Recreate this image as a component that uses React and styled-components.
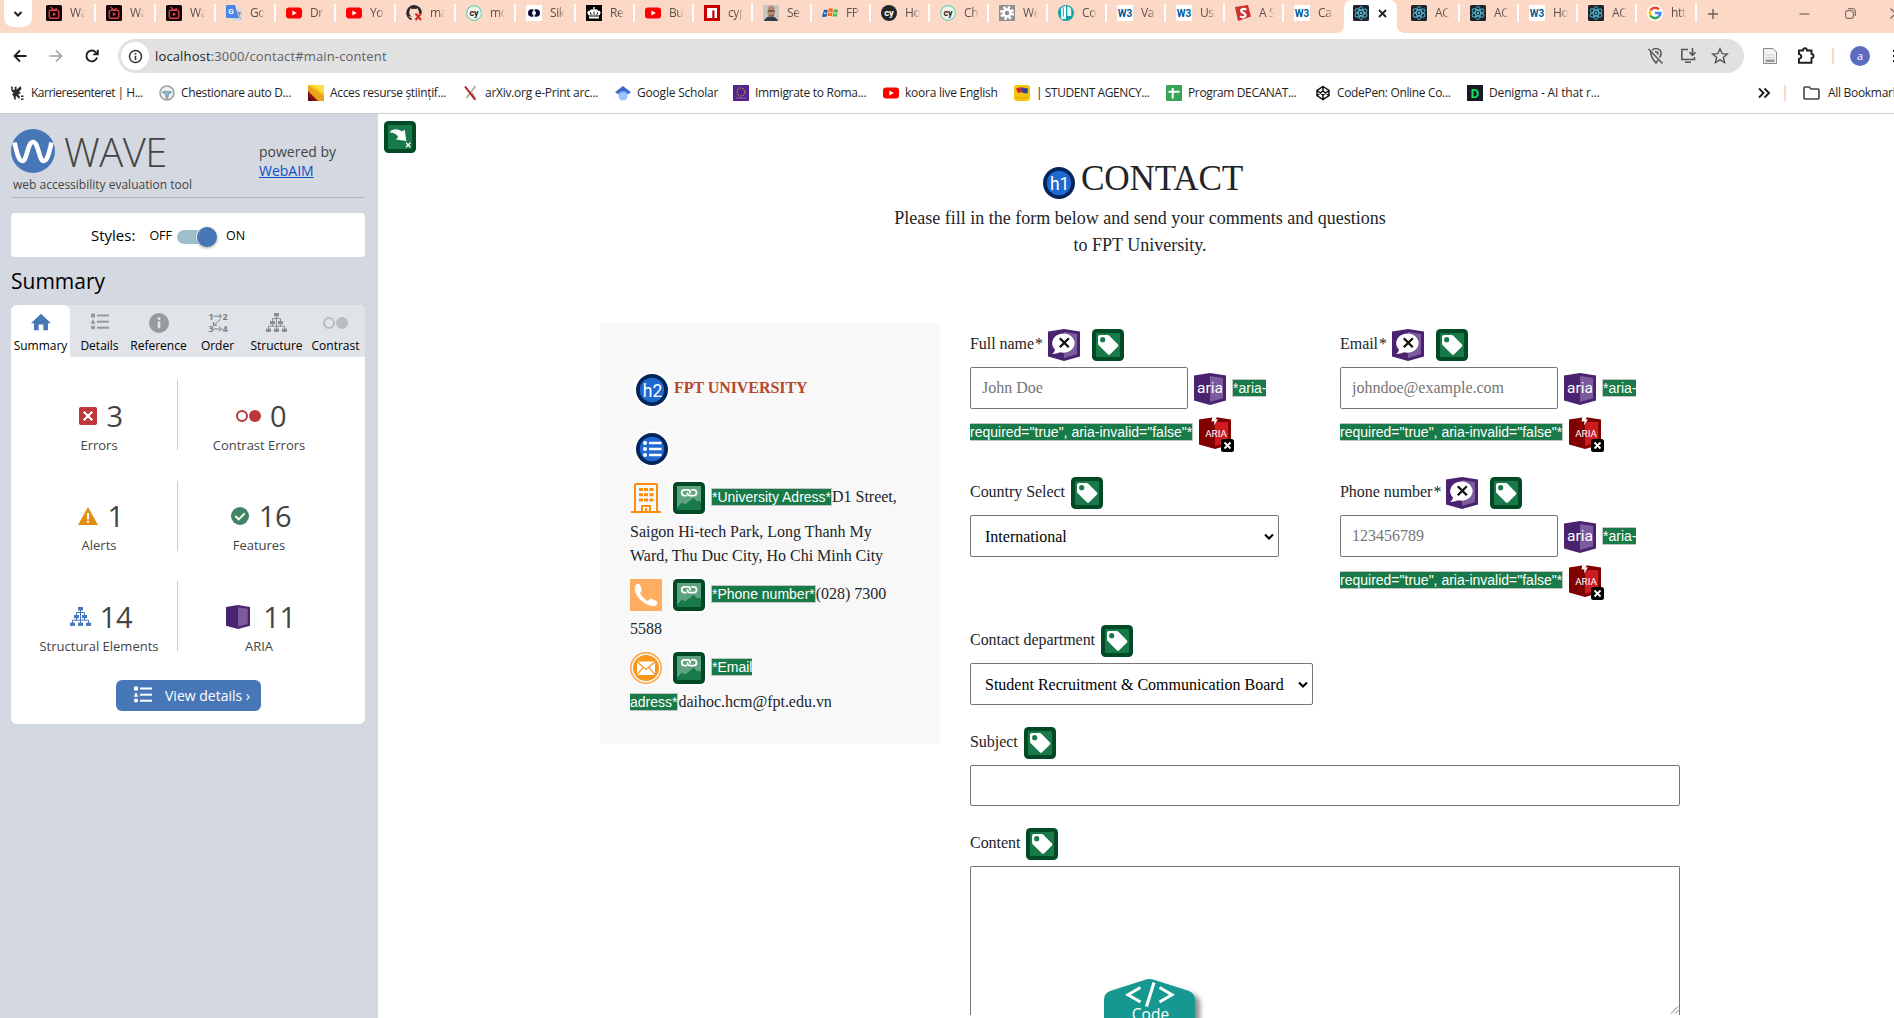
import React from "react";
import styled, { createGlobalStyle, css } from "styled-components";

const SANS = '"Open Sans", "Noto Sans", sans-serif';
const SERIF = '"Liberation Serif", "Times New Roman", serif';
const ARIAL = '"Liberation Sans", Arial, sans-serif';

const GlobalStyle = createGlobalStyle`
  * { box-sizing: border-box; }
  html, body { margin: 0; padding: 0; height: 100%; overflow: hidden; }
  #root { height: 1018px; }
  svg { display: block; flex: none; }
`;

/* ---------- browser chrome ---------- */

const Screen = styled.div`
  width: 1894px;
  height: 1018px;
  display: flex;
  flex-direction: column;
  overflow: hidden;
  background: #fff;
`;

const TabStrip = styled.div`
  height: 33px;
  flex: none;
  display: flex;
  background: #fcd9c7;
  font-family: ${SANS};
  overflow: hidden;
`;

const TabSearch = styled.div`
  width: 28px;
  height: 27px;
  margin: 0 4px;
  border-radius: 0 0 9px 9px;
  background: #fff;
  display: flex;
  align-items: center;
  justify-content: center;
`;

const Tab = styled.div`
  flex: none;
  width: ${(p) => p.$width}px;
  height: 26px;
  padding-left: 10px;
  display: flex;
  align-items: center;
  border-right: 2px solid ${(p) => (p.$divided ? "#fff" : "transparent")};
  border-image: ${(p) => (p.$divided ? "linear-gradient(transparent 5px, #fff 5px, #fff 21px, transparent 21px) 1" : "none")};
`;

const TabTitle = styled.span`
  width: 15px;
  margin-left: 8px;
  overflow: hidden;
  white-space: nowrap;
  font-size: 12px;
  line-height: 18px;
  letter-spacing: -0.4px;
  color: #5c504b;
  mask-image: linear-gradient(90deg, #000 55%, transparent);
`;

const ActiveTab = styled.div`
  position: relative;
  flex: none;
  width: 53px;
  margin: 0 4px 0 1px;
  height: 33px;
  padding: 0 10px 7px 9px;
  display: flex;
  align-items: center;
  justify-content: space-between;
  background: #fff;
  border-radius: 8px 8px 0 0;
  &::before,
  &::after {
    content: "";
    position: absolute;
    bottom: 0;
    width: 8px;
    height: 8px;
  }
  &::before {
    left: -8px;
    background: radial-gradient(circle at 0 0, transparent 8px, #fff 8px);
  }
  &::after {
    right: -8px;
    background: radial-gradient(circle at 100% 0, transparent 8px, #fff 8px);
  }
`;

const NewTab = styled.div`
  margin-left: 10px;
  height: 27px;
  display: flex;
  align-items: center;
`;

const WindowControls = styled.div`
  margin-left: auto;
  margin-right: -7px;
  height: 27px;
  display: flex;
  align-items: center;
  gap: 34.5px;
`;

const Toolbar = styled.div`
  height: 46px;
  flex: none;
  padding-left: 12px;
  display: flex;
  align-items: center;
  font-family: ${SANS};
`;

const NavButton = styled.div`
  width: 16px;
  margin-right: 20px;
  display: flex;
  justify-content: center;
`;

const AddressBar = styled.div`
  flex: none;
  width: 1626px;
  height: 34px;
  margin-left: -2px;
  padding: 0 15px 0 3px;
  border-radius: 17px;
  background: #e1e1e1;
  display: flex;
  align-items: center;
`;

const SiteInfo = styled.div`
  width: 28px;
  height: 28px;
  border-radius: 50%;
  background: #fff;
  display: flex;
  align-items: center;
  justify-content: center;
`;

const Url = styled.div`
  margin-left: 6px;
  flex: 1;
  font-size: 13px;
  letter-spacing: 0.14px;
  color: #5f6063;
  b {
    font-weight: 400;
    color: #1f1f1f;
  }
`;

const AddressIcons = styled.div`
  display: flex;
  gap: 14px;
`;

const ToolbarExtras = styled.div`
  flex: none;
  display: flex;
  align-items: center;
  padding-left: 17px;
`;

const PeachRule = styled.div`
  flex: none;
  width: 2px;
  height: 16px;
  margin: ${(p) => p.$margin};
  background: #fcd9c7;
`;

const Avatar = styled.div`
  flex: none;
  width: 20px;
  height: 20px;
  border-radius: 50%;
  background: #5c6bc0;
  color: #fff;
  font-size: 11px;
  line-height: 19px;
  text-align: center;
  margin-right: 22px;
`;

const BookmarkBar = styled.div`
  height: 35px;
  flex: none;
  padding: 0 0 7px 9px;
  display: flex;
  align-items: center;
  border-bottom: 1px solid #c9cbcc;
  font-family: ${SANS};
  font-size: 12px;
  color: #1f1f1f;
  white-space: nowrap;
`;

const Bookmark = styled.div`
  flex: none;
  width: ${(p) => p.$width}px;
  letter-spacing: ${(p) => p.$track}px;
  display: flex;
  align-items: center;
  gap: 6px;
`;

const BookmarkEnd = styled.div`
  display: flex;
  align-items: center;
`;

const AllBookmarks = styled.div`
  display: flex;
  align-items: center;
  gap: 8px;
  letter-spacing: -0.3px;
`;

/* ---------- layout ---------- */

const Body = styled.div`
  flex: 1;
  min-height: 0;
  display: flex;
`;

/* ---------- WAVE sidebar ---------- */

const Sidebar = styled.aside`
  width: 378px;
  flex: none;
  padding: 15px 13px 0 11px;
  background: #d4d8e0;
  font-family: ${SANS};
  color: #000;
`;

const Brand = styled.header`
  height: 69px;
  display: flex;
  justify-content: space-between;
  border-bottom: 1px solid #b4b7ba;
  color: #444;
`;

const BrandRow = styled.div`
  height: 44px;
  display: flex;
  align-items: center;
  gap: 9px;
`;

const BrandName = styled.span`
  padding-top: 2px;
  font-size: 40px;
  line-height: 44px;
  font-weight: 300;
  letter-spacing: -0.5px;
`;

const Tagline = styled.div`
  margin: 3px 0 0 2px;
  font-size: 12px;
  line-height: 17px;
`;

const Powered = styled.div`
  width: 106px;
  padding-top: 13px;
  font-size: 14px;
  line-height: 19px;
  a {
    color: #0a52cc;
    text-decoration: underline;
  }
`;

const StylesBox = styled.div`
  height: 44px;
  margin-top: 15px;
  padding-left: 80px;
  border-radius: 4px;
  background: #fff;
  display: flex;
  align-items: center;
  font-size: 15px;
`;

const ToggleLabel = styled.span`
  font-size: 12.5px;
  margin-left: ${(p) => p.$gap}px;
`;

const Toggle = styled.span`
  width: 40px;
  height: 14px;
  margin: 3px 0 0 5px;
  border-radius: 7px;
  background: #9dbfc9;
  display: flex;
  align-items: center;
  justify-content: flex-end;
`;

const Knob = styled.span`
  flex: none;
  width: 20px;
  height: 20px;
  border-radius: 50%;
  background: #4877b8;
  box-shadow: 0 1px 3px rgba(0, 0, 0, 0.4), 0 0 0 1px #fff;
`;

const SectionTitle = styled.h2`
  margin: 8px 0 8px;
  height: 32px;
  font-size: 21px;
  line-height: 32px;
  font-weight: 400;
`;

const Panel = styled.section`
  height: 419px;
  border-radius: 6px;
  background: #fff;
  overflow: hidden;
`;

const PanelTabs = styled.nav`
  height: 52px;
  display: grid;
  grid-template-columns: repeat(6, 59px);
  background: #e0e3e8;
`;

const PanelTab = styled.div`
  padding-top: 8px;
  display: flex;
  flex-direction: column;
  align-items: center;
  font-size: 12px;
  line-height: 16px;
  border-radius: 6px 6px 0 0;
  background: ${(p) => (p.$active ? "#fff" : "transparent")};
  svg { margin-bottom: 5px; }
`;

const StatsGrid = styled.div`
  padding-top: 23px;
  display: grid;
  grid-template-columns: 167px 163px;
  grid-template-rows: 70px 70px 70px;
  row-gap: 30.5px;
`;

const Stat = styled.div`
  display: flex;
  flex-direction: column;
  align-items: center;
  padding-top: ${(p) => p.$top}px;
  padding-left: ${(p) => (p.$first ? 10 : 0)}px;
  padding-right: ${(p) => (p.$first ? 0 : 1)}px;
  border-right: ${(p) => (p.$first ? "1px solid #ccc" : "0")};
  color: #444;
`;

const StatTop = styled.div`
  height: 38px;
  padding-left: 4px;
  display: flex;
  align-items: center;
  gap: ${(p) => p.$gap}px;
  font-size: 29px;
  line-height: 38px;
  letter-spacing: -0.4px;
`;

const StatLabel = styled.div`
  margin-top: 1px;
  font-size: 13px;
  line-height: 18px;
`;

const DetailsButton = styled.div`
  width: 145px;
  height: 31px;
  margin: 29px 0 0 105px;
  padding-left: 17px;
  border-radius: 6px;
  background: #4877b8;
  color: #fff;
  display: flex;
  align-items: center;
  gap: 12px;
  font-size: 14px;
  white-space: nowrap;
`;

/* ---------- evaluated page ---------- */

const Page = styled.main`
  position: relative;
  flex: 1;
  padding: 7px 0 0 6px;
  font-family: ${SERIF};
  font-size: 16px;
  line-height: 24px;
  color: #212529;
  overflow: hidden;
`;

const Hero = styled.header`
  width: 1080px;
  margin: 5px 0 0 216px;
  text-align: center;
  font-size: 18px;
  line-height: 27px;
`;

const HeroTitle = styled.h1`
  height: 47px;
  margin: 0;
  padding-left: 6px;
  display: flex;
  align-items: flex-start;
  justify-content: center;
  gap: 6px;
  font-size: 35.2px;
  line-height: 42px;
  letter-spacing: -0.2px;
  font-weight: 400;
  svg { margin-top: 9px; }
`;

const Content = styled.div`
  margin: 64px 0 0 216px;
  display: flex;
  align-items: flex-start;
  gap: 30px;
`;

const Card = styled.section`
  width: 340px;
  height: 421px;
  padding: 51px 30px 0;
  background: #f8f8f8;
`;

const CardTitle = styled.h2`
  margin: 0 0 27px;
  padding-left: 6px;
  display: flex;
  gap: 6px;
  font-size: 16px;
  line-height: 28px;
  color: #b5472c;
  letter-spacing: -0.06px;
`;

const ListBadge = styled.div`
  padding-left: 6px;
  margin-bottom: 6px;
`;

const InfoItem = styled.div`
  letter-spacing: -0.02px;
`;

const InfoLead = styled.div`
  height: 49px;
  padding-top: 11px;
  display: flex;
  white-space: nowrap;
`;

const InfoText = styled.span`
  margin-top: 3px;
`;

const Halo = styled.span`
  width: 32px;
  height: 32px;
  margin: ${(p) => p.$margin || 0};
  border-radius: ${(p) => (p.$round ? "50%" : "5px")};
  box-shadow: 0 0 0 2.5px #fff;
`;

const NoteLine = styled.div`
  height: 24px;
  display: flex;
`;

const AltNote = styled.span`
  height: 18px;
  font-family: ${ARIAL};
  font-size: 14px;
  line-height: 16px;
  letter-spacing: 0;
  color: #fff;
  background: #187a48;
  border: solid #c4c4c4;
  border-width: ${(p) => p.$edges};
  margin-top: ${(p) => p.$top}px;
  white-space: nowrap;
`;

const Form = styled.form`
  width: 710px;
  padding-top: 6px;
`;

const FieldGrid = styled.div`
  display: grid;
  grid-template-columns: 370px 340px;
  grid-auto-rows: 148px;
`;

const Field = styled.div`
  height: ${(p) => p.$height}px;
`;

const FieldLabel = styled.div`
  height: 32px;
  margin-bottom: 6px;
  display: flex;
  letter-spacing: -0.04px;
  white-space: nowrap;
`;

const LabelText = styled.span`
  margin-top: 3px;
`;

const Required = styled.span`
  margin: 3px 5px 0 1px;
`;

const LabelMarks = styled.span`
  display: flex;
  gap: 12px;
  margin-left: ${(p) => p.$gap}px;
`;

const controlBox = css`
  display: block;
  border: 1px solid #767676;
  border-radius: 2px;
  background: #fff;
  font-family: ${SERIF};
  font-size: 16px;
  line-height: 24px;
  outline: none;
`;

const Input = styled.input`
  ${controlBox}
  width: ${(p) => p.$width}px;
  height: ${(p) => p.$height || 42}px;
  padding: 0 11px;
  &::placeholder { color: #757575; opacity: 1; }
`;

const Select = styled.div`
  ${controlBox}
  width: ${(p) => p.$width}px;
  height: 42px;
  padding: 1px 4px 0 14px;
  display: flex;
  align-items: center;
  justify-content: space-between;
  color: #000;
`;

const Textarea = styled.div`
  ${controlBox}
  width: 710px;
  height: 149px;
  border-bottom: 0;
  border-radius: 2px 2px 0 0;
  display: flex;
  align-items: flex-end;
  justify-content: flex-end;
`;

const ControlRow = styled.div`
  height: 50px;
  display: flex;
  gap: 6px;
`;

const RowMark = styled.span`
  margin-top: ${(p) => p.$top}px;
`;

const ErrorRow = styled.div`
  display: flex;
  gap: 6px;
`;

const CodeBadge = styled.div`
  position: absolute;
  left: 720px;
  bottom: 0;
`;

/* ---------- svg text ---------- */

const GlyphText = styled.text`
  font-family: ${(p) => p.$family || "Roboto, sans-serif"};
  font-weight: ${(p) => p.$weight || 400};
  text-anchor: middle;
`;

/* ---------- WAVE markers ---------- */

const RoundMark = ({ label }) => (
  <svg width="32" height="32" viewBox="0 0 32 32">
    <circle cx="16" cy="16" r="16" fill="#02265a" />
    <circle cx="16" cy="16" r="12.2" fill="#2069d0" />
    {label ? (
      <GlyphText x="16.5" y="22.7" fontSize="17.5" fill="#fff">{label}</GlyphText>
    ) : (
      <g fill="#fff">
        <circle cx="9" cy="10" r="2" /><circle cx="9" cy="16" r="2" /><circle cx="9" cy="22" r="2" />
        <rect x="13" y="8.7" width="12.5" height="2.6" rx="0.5" />
        <rect x="13" y="14.7" width="12.5" height="2.6" rx="0.5" />
        <rect x="13" y="20.7" width="12.5" height="2.6" rx="0.5" />
      </g>
    )}
  </svg>
);

const GreenTile = ({ children }) => (
  <svg width="32" height="32" viewBox="0 0 32 32">
    <rect width="32" height="32" rx="4.5" fill="#024a26" />
    <rect x="4" y="4" width="24" height="24" rx="1" fill="#187a48" />
    {children}
  </svg>
);

const TagMark = () => (
  <GreenTile>
    <path d="M8 6 H15.5 Q16.6 6 17.4 6.8 L26 15.4 Q26.8 16.5 26 17.6 L18.2 25.3 Q17 26.4 15.8 25.3 L7 16.6 Q6 15.6 6 14.4 V8 Q6 6 8 6 Z" fill="#fff" />
    <circle cx="10.7" cy="10.7" r="2.6" fill="#187a48" />
  </GreenTile>
);

const SkipMark = () => (
  <GreenTile>
    <path d="M5.5 11.5 C8 7.6 14 7.2 17.7 10.6 L20.7 8.8 L22.3 20 L12 18.6 L14.2 16 C12.5 13 9.5 11.3 5.5 11.5 Z" fill="#fff" />
    <path d="M22 21.8 l4.4 4.4 M26.4 21.8 l-4.4 4.4" stroke="#fff" strokeWidth="1.4" />
  </GreenTile>
);

const ImageMark = () => (
  <GreenTile>
    <rect x="4" y="4" width="24" height="24" fill="#5da37f" />
    <path d="M4 25.5 L9 20.5 L12 22.5 L20.8 15.7 L24 19.5 L26 18.5 L28 20.5 V28 H4 Z" fill="#187a48" />
    <path d="M13.8 13.6 H11.6 A2.9 2.9 0 0 1 11.6 7.8 H14.6 Q17.2 7.8 17.2 10 V11.4 M18.2 7.8 H20.6 A2.9 2.9 0 0 1 20.6 13.6 H17.4 Q14.6 13.6 14.6 11.4 V10.2" fill="none" stroke="#fff" strokeWidth="1.7" />
  </GreenTile>
);

const Box = ({ dark, light, children, size = 32 }) => (
  <svg width={size} height={size} viewBox="0 0 32 32">
    <path d="M16 0 L32 2.6 V27.5 L16 32 L0 27.5 V2.6 Z" fill={dark} />
    <path d="M16 3 L29 5 V25.3 L16 29 Z" fill={light} />
    {children}
  </svg>
);

const AriaMark = () => (
  <Box dark="#4a2370" light="#7c5a9e">
    <GlyphText x="16" y="20" fontSize="15.5" fill="#fff">aria</GlyphText>
  </Box>
);

const AriaLabelMark = () => (
  <Box dark="#4a2370" light="#7c5a9e">
    <path d="M4 25 C6 23.5 6.8 22 7 20.5 A11.2 9.6 0 1 1 12 23.3 C9.5 24.5 7 25 4 25 Z" fill="#fff" />
    <path d="M11.8 9.3 l9 9 M20.8 9.3 l-9 9" stroke="#111" strokeWidth="2.3" />
  </Box>
);

const BrokenAriaMark = () => (
  <svg width="35" height="35" viewBox="0 0 35 35">
    <path d="M0 2.4 L13 0.6 L16 0 L19 0.6 L32 2.4 V27.5 L16 32 L0 27.5 Z" fill="#800000" />
    <path d="M16 5 L29 5 V25.3 L16 29 Z" fill="#cd1c1f" />
    <path d="M13.5 -1 L12.5 4.5 L15.5 4.2 L15 8.5 L19 2.3 L16.5 2.6 L18.5 -1 Z" fill="#fff" />
    <GlyphText x="17" y="19.5" fontSize="9.8" fill="#fff">ARIA</GlyphText>
    <rect x="22" y="22" width="13" height="13" rx="2.5" fill="#000" />
    <path d="M25.5 25.5 l6 6 M31.5 25.5 l-6 6" stroke="#fff" strokeWidth="1.8" />
  </svg>
);

/* ---------- sidebar icons ---------- */

const WaveLogo = () => (
  <svg width="44" height="44" viewBox="0 0 44 44">
    <circle cx="22" cy="22" r="22" fill="#4877b8" />
    <path d="M3.5 13.5 C6 24 7.5 32 11.5 32 C16 32 16.5 13 22 13 C27.5 13 28 32 32.5 32 C36.5 32 38 24 40.5 13.5" fill="none" stroke="#fff" strokeWidth="4.6" />
  </svg>
);

const HomeIcon = () => (
  <svg width="20" height="20" viewBox="0 0 20 20">
    <path d="M10 0.8 L20 10.2 H17 V17.2 H12.3 V11.5 H7.7 V17.2 H3 V10.2 H0 Z" fill="#4877b8" />
  </svg>
);

const ListIcon = ({ color }) => (
  <svg width="20" height="20" viewBox="0 0 20 20" fill={color}>
    <rect x="1" y="0.5" width="4" height="4" />
    <path d="M3 6 L5.3 10.8 H0.7 Z" />
    <circle cx="3" cy="14.5" r="2.1" />
    <rect x="7" y="1.5" width="12" height="2" /><rect x="7" y="7.7" width="12" height="2" /><rect x="7" y="13.7" width="12" height="2" />
  </svg>
);

const InfoIcon = () => (
  <svg width="20" height="20" viewBox="0 0 20 20">
    <circle cx="10" cy="10" r="10" fill="#96999d" />
    <rect x="8.7" y="8.3" width="2.6" height="7" fill="#e0e3e8" /><circle cx="10" cy="5.6" r="1.5" fill="#e0e3e8" />
  </svg>
);

const OrderIcon = () => (
  <svg width="20" height="20" viewBox="0 0 20 20" fill="#7d8084">
    <GlyphText x="3" y="6.5" fontSize="9" $weight={700} $family={SANS}>1</GlyphText>
    <GlyphText x="17" y="6.5" fontSize="9" $weight={700} $family={SANS}>2</GlyphText>
    <GlyphText x="3" y="19" fontSize="9" $weight={700} $family={SANS}>3</GlyphText>
    <GlyphText x="17" y="19" fontSize="9" $weight={700} $family={SANS}>4</GlyphText>
    <path d="M5.5 3.2 h8 M11 0.7 l2.6 2.5 l-2.6 2.5 M5.5 16 h8 M11 13.5 l2.6 2.5 l-2.6 2.5 M12.5 6.5 L6 12 M5.5 9 v3.3 h3.5" fill="none" stroke="#7d8084" strokeWidth="1" />
  </svg>
);

const TreeIcon = ({ color, size = 21 }) => (
  <svg width={size} height="20" viewBox="0 0 21 20" fill={color}>
    <rect x="8" y="0" width="5" height="3.4" /><rect x="4" y="8" width="5" height="3.2" /><rect x="12" y="8" width="5" height="3.2" />
    <rect x="0" y="15.7" width="5" height="3.2" /><rect x="8" y="15.7" width="5" height="3.2" /><rect x="16" y="15.7" width="5" height="3.2" />
    <path d="M10.5 3 V5.5 M6.5 8 V5.5 H14.5 V8 M10.5 5.5 V16 M2.5 16 V13.2 H18.5 V16 M6.5 11 V13.2 M14.5 11 V13.2" fill="none" stroke={color} strokeWidth="1" />
  </svg>
);

const ContrastIcon = ({ color, height = 20 }) => (
  <svg width="25" height={height} viewBox="0 0 25 20">
    <circle cx="6" cy="10" r="5" fill="none" stroke={color} strokeWidth="2" />
    <circle cx="19" cy="10" r="6" fill={color} />
  </svg>
);

const ErrorIcon = () => (
  <svg width="18" height="18" viewBox="0 0 18 18">
    <rect width="18" height="18" rx="2" fill="#bd3638" />
    <path d="M4.7 4.7 l8.6 8.6 M13.3 4.7 l-8.6 8.6" stroke="#fff" strokeWidth="2.2" />
  </svg>
);

const AlertIcon = () => (
  <svg width="20" height="18" viewBox="0 0 20 18">
    <path d="M10 0 L20 18 H0 Z" fill="#e38d13" />
    <rect x="9" y="6" width="2" height="6.4" fill="#fff" /><rect x="9" y="13.8" width="2" height="2" fill="#fff" />
  </svg>
);

const CheckIcon = () => (
  <svg width="18" height="18" viewBox="0 0 18 18">
    <circle cx="9" cy="9" r="9" fill="#428565" />
    <path d="M4.3 9 l3.4 3.4 l6 -6" fill="none" stroke="#fff" strokeWidth="2" />
  </svg>
);

/* ---------- content pictures ---------- */

const BuildingIcon = () => (
  <svg width="32" height="32" viewBox="0 0 32 32" fill="none" stroke="#fd8d0c" strokeWidth="2">
    <path d="M5 30 V3 Q5 2 6 2 H26 Q27 2 27 3 V30 M1 30 H31 M12 30 V24 H20 V30 M16 30 V26" />
    <path d="M9 7.5 h4 M14 7.5 h4 M19.5 7.5 h4 M9 12.7 h4 M14 12.7 h4 M19.5 12.7 h4 M9 18 h4 M14 18 h4 M19.5 18 h4" strokeWidth="3" />
  </svg>
);

const PhoneIcon = () => (
  <svg width="32" height="32" viewBox="0 0 32 32">
    <rect width="32" height="32" fill="#ffae61" />
    <path d="M5 7.5 C5.5 5.5 7.5 4.2 9.3 5 C10.8 7 11.4 9.6 11.8 11.2 C11.5 12.8 9.8 13 10.2 14.3 C12 17.7 14 19.8 17.2 21.7 C18.8 22.3 19.2 19.7 21 19.8 C23.2 20.5 25.8 21.5 27.3 23 C27.6 25.5 25.8 27.3 23 27.2 C14 26.2 6 18 4.9 11 Z" fill="#fff" />
  </svg>
);

const MailIcon = () => (
  <svg width="32" height="32" viewBox="0 0 32 32">
    <circle cx="16" cy="16" r="15.2" fill="none" stroke="#f7a238" strokeWidth="1.4" />
    <circle cx="16" cy="16" r="13" fill="#f7981d" />
    <path d="M7 9.5 H25 V23 H7 Z" fill="#fff" />
    <path d="M7 9.7 L16 17.5 L25 9.7 M7 22.7 L13 15.6 M25 22.7 L19 15.6" fill="none" stroke="#f7981d" strokeWidth="1.3" />
  </svg>
);

const SelectArrow = () => (
  <svg width="10" height="8" viewBox="0 0 10 8"><path d="M1 1.6 L5 5.6 L9 1.6" fill="none" stroke="#000" strokeWidth="2.1" /></svg>
);

const ResizeGrip = () => (
  <svg width="9" height="10" viewBox="0 0 9 10"><path d="M1 8.5 L8 1.5 M5 8.5 L8.5 5" stroke="#777" strokeWidth="1" /></svg>
);

const CodeHexagon = () => (
  <svg width="110" height="45" viewBox="0 0 110 45">
    <defs><filter id="soft" x="-20%" y="-20%" width="150%" height="160%"><feDropShadow dx="5" dy="4" stdDeviation="2.5" floodOpacity="0.45" /></filter></defs>
    <path d="M12 18 L46.5 7 Q51.5 5 56.5 7 L91 18 Q97 20.5 97 27 V60 H6 V27 Q6 20.5 12 18 Z" fill="#19978f" filter="url(#soft)" />
    <path d="M42.5 14.5 L30 21.8 L42.5 29 M61.5 14.5 L74 21.8 L61.5 29" fill="none" stroke="#fff" strokeWidth="3" />
    <path d="M56 9.5 L48.5 33.5" stroke="#fff" strokeWidth="3.2" />
    <GlyphText x="52.5" y="46.5" fontSize="15.5" fill="#fff" $family={SANS}>Code</GlyphText>
  </svg>
);

/* ---------- favicons ---------- */

const ReactMarkIcon = () => (
  <>
    <rect width="16" height="16" rx="1.5" fill="#20232a" />
    <g fill="none" stroke="#4fb8d3" strokeWidth="0.9">
      <ellipse cx="8" cy="8" rx="6.6" ry="2.6" transform="rotate(30 8 8)" />
      <ellipse cx="8" cy="8" rx="6.6" ry="2.6" transform="rotate(90 8 8)" />
      <ellipse cx="8" cy="8" rx="6.6" ry="2.6" transform="rotate(150 8 8)" />
    </g>
    <circle cx="8" cy="8" r="1.2" fill="#4fb8d3" />
  </>
);

const favicons = {
  tv: (
    <>
      <rect width="16" height="16" rx="1.5" fill="#0d0505" />
      <rect x="3.2" y="5.2" width="9.6" height="8" rx="1.5" fill="none" stroke="#d93c45" strokeWidth="1.4" />
      <path d="M6.8 7.2 L10.3 9.2 L6.8 11.2 Z" fill="#d93c45" />
      <path d="M4.5 2 L8 5 L11 3.2" fill="none" stroke="#d93c45" strokeWidth="1.2" />
    </>
  ),
  translate: (
    <>
      <rect x="6" y="4" width="10" height="12" rx="1" fill="#d5dae0" />
      <path d="M1 0 H9 L12.5 13 H1 Q0 13 0 12 V1 Q0 0 1 0 Z" fill="#4a85ee" />
      <GlyphText x="5" y="9" fontSize="8" fill="#fff" $weight={700}>G</GlyphText>
      <path d="M10 8 h5 M12.5 6.5 v1.5 M14 8 q-1 4 -3.5 5.5 M11 9.5 q1.5 3 3.8 4" stroke="#71808f" fill="none" strokeWidth="1" />
    </>
  ),
  youtube: (
    <>
      <rect x="0" y="2.5" width="16" height="11" rx="3" fill="#f00" />
      <path d="M6.4 5.5 L10.8 8 L6.4 10.5 Z" fill="#fff" />
    </>
  ),
  github: (
    <>
      <path d="M8 0 A8 8 0 0 0 5.5 15.5 V13 C3.6 13.2 3 12 2.5 11 C4 11.2 4.5 12 6 11.6 C4 10.8 3 9 3.3 6.6 L4 4.8 L3.9 3.2 L6 4 Q8 3.5 10 4 L12 3.2 L12.2 5 L13 6.5 L12.6 8.5 H15.9 A8 8 0 0 0 8 0 Z" fill="#24292f" />
      <path d="M9.5 8.5 l5.5 6.5 M15 8.5 l-5.5 6.5" stroke="#cf2c2c" strokeWidth="2" />
    </>
  ),
  cyLight: (
    <>
      <circle cx="8" cy="8" r="7.4" fill="#f3f4ee" stroke="#69d3a7" strokeWidth="1.1" />
      <GlyphText x="8" y="10.5" fontSize="9" fill="#1b1e2e" $weight={700}>cy</GlyphText>
    </>
  ),
  cyDark: (
    <>
      <circle cx="8" cy="8" r="8" fill="#262729" />
      <GlyphText x="8" y="10.7" fontSize="9.5" fill="#fff" $weight={700}>cy</GlyphText>
    </>
  ),
  siko: (
    <>
      <rect width="16" height="16" fill="#fff" />
      <path d="M7.3 4.2 H5.8 A3.8 3.8 0 0 0 5.8 11.8 H7.3 V9.5 H6.2 V6.5 H7.3 Z M8.7 4.2 H10.2 A3.8 3.8 0 0 1 10.2 11.8 H8.7 V9.5 H9.8 V6.5 H8.7 Z" fill="#0c0b38" />
    </>
  ),
  crown: (
    <>
      <rect width="16" height="16" fill="#000" />
      <path d="M3 13.5 V11.5 H13 V13.5 Z M3 10.6 C0.5 8 1 5.5 3.8 5.7 Q5.5 3.6 7.3 4.8 V2 H8.7 V4.8 Q10.5 3.6 12.2 5.7 C15 5.5 15.5 8 13 10.6 Z" fill="#fff" />
      <path d="M5.3 10.2 L4.4 7.2 M8 10 V6.5 M10.7 10.2 L11.6 7.2" stroke="#000" strokeWidth="0.9" />
    </>
  ),
  npm: (
    <>
      <rect width="16" height="16" fill="#c60000" />
      <path d="M3 3 H13 V13 H10.5 V5.5 H8.3 V13 H3 Z" fill="#fff" />
    </>
  ),
  portrait: (
    <>
      <rect width="16" height="16" fill="#c9c5c1" />
      <path d="M1 16 Q3 11 8 11.5 Q13 11 15 16 Z" fill="#2f3b46" />
      <ellipse cx="8.2" cy="6.4" rx="3.9" ry="5.8" fill="#b98871" />
      <path d="M5 6 h6.4" stroke="#333" strokeWidth="1.1" />
      <path d="M6 10 Q8 12.5 10.5 10" stroke="#6b4a3c" strokeWidth="1.2" fill="none" />
    </>
  ),
  fpt: (
    <>
      <path d="M2 4.8 H5.8 L4.6 11.6 Q2 12.6 0 11.4 Z" fill="#1d67b2" />
      <path d="M7 3.4 Q9.5 2.8 11 4 L9.8 11 H5.4 Z" fill="#f26f21" />
      <path d="M12 4.4 Q14.5 3.8 16 5 L14.7 11.6 H10.6 Z" fill="#4db848" />
      <path d="M2 8.2 h2.5 M7 7.4 h2.5 M12 8 h2.5" stroke="#fff" strokeWidth="1" />
    </>
  ),
  gear: (
    <>
      <rect width="16" height="16" fill="#8f8f8f" />
      <circle cx="8" cy="8" r="5.6" fill="none" stroke="#fff" strokeWidth="2.8" strokeDasharray="2.4 2" />
      <circle cx="8" cy="8" r="3.5" fill="none" stroke="#fff" strokeWidth="2.6" />
    </>
  ),
  confluence: (
    <>
      <circle cx="8" cy="8" r="8" fill="#12a3a8" />
      <path d="M8 1 V14 H3.2 L3 3.5 Q5 1.2 8 1 Z" fill="#fff" />
      <path d="M9.3 1.2 Q13 2 13.2 5 V11 H9.3 Z" fill="#e4f5f4" />
      <path d="M5.3 2.5 V11.5" stroke="#12a3a8" strokeWidth="1" />
    </>
  ),
  w3: (
    <>
      <rect width="16" height="16" fill="#fff" />
      <GlyphText x="8" y="12.3" fontSize="11" textLength="14.5" lengthAdjust="spacingAndGlyphs" fill="#005a9c" $weight={700}>W3</GlyphText>
    </>
  ),
  sred: (
    <>
      <path d="M0 2 L13 0 L16 11.5 L3 16 Z" fill="#d2322d" />
      <path d="M11.3 4.6 C8 3 5 4.5 6.5 6.6 C8.3 8.3 11.6 8.6 10.3 11 C8.8 12.7 6.5 12.3 5 11.4" fill="none" stroke="#fff" strokeWidth="2.2" />
    </>
  ),
  react: <ReactMarkIcon />,
  google: (
    <>
      <circle cx="8" cy="8" r="8" fill="#fff" />
      <g fill="none" strokeWidth="2.6">
        <path d="M12 4.4 A5.3 5.3 0 0 0 3.5 5.4" stroke="#ea4335" />
        <path d="M3.5 5.4 A5.3 5.3 0 0 0 3.5 10.6" stroke="#fbbc05" />
        <path d="M3.5 10.6 A5.3 5.3 0 0 0 11.6 11.8" stroke="#34a853" />
        <path d="M11.6 11.8 A5.3 5.3 0 0 0 13.3 8 H8" stroke="#4285f4" />
      </g>
    </>
  ),
  lions: (
    <path d="M2 1 L4 2.5 L3.5 5 L6 4.5 L5.5 2 L7.5 1.5 L7.5 4.5 L9 3.5 L11.5 1 L12.5 4 L10 6.5 L12 8 L9 9.5 L11 11.5 L10 14 L7.5 11 L6.5 12 L7 15 L5 14 L4.5 11 L3 9.5 L4.5 8 L2.5 6 Z M12 10.5 h2.5 v1.5 h-2.5 Z M12 13.5 h2.5 v1.5 h-2.5 Z" fill="#2b2b2b" />
  ),
  wheel: (
    <>
      <circle cx="8" cy="8" r="7" fill="#eef2f3" stroke="#9a9fa1" strokeWidth="1.5" />
      <path d="M2 7 Q8 4.5 14 7 L10 9.5 L9.2 14 H6.8 L6 9.5 Z" fill="#9a9fa1" />
      <circle cx="8" cy="8.2" r="2" fill="#6ec3e0" />
    </>
  ),
  acces: (
    <>
      <rect width="16" height="16" fill="#e9a21c" />
      <path d="M0 0 H16 V11 Z" fill="#f8c81c" />
      <path d="M4 0 H16 V8 Z" fill="#fbe04a" />
      <path d="M0 6 L10 16 H0 Z" fill="#8a1017" />
      <path d="M0 10.5 L5.5 16 H0 Z" fill="#5c0a10" />
    </>
  ),
  arxiv: (
    <>
      <path d="M12.5 1 L3.5 13" stroke="#a8a19e" strokeWidth="1.5" />
      <path d="M9 8 L12.5 15" stroke="#a8a19e" strokeWidth="2" />
      <path d="M2 1.5 L12 14.5" stroke="#b31b1b" strokeWidth="2" />
    </>
  ),
  scholar: (
    <>
      <path d="M8 1 L16 7.2 L8 12 L0 7.2 Z" fill="#356ac3" />
      <circle cx="8" cy="11" r="4.6" fill="#a0c3ff" />
      <path d="M3.5 8.5 Q8 5 12.5 8.5" fill="none" stroke="#76a7fa" strokeWidth="1.5" />
    </>
  ),
  romania: (
    <>
      <rect width="16" height="16" rx="0.5" fill="#56238c" />
      <circle cx="8" cy="7" r="4" fill="none" stroke="#a07f55" strokeWidth="1.5" strokeDasharray="1.6 1.2" />
      <path d="M3 13 h10" stroke="#8a6aa5" strokeWidth="1" />
    </>
  ),
  student: (
    <>
      <rect width="16" height="16" rx="3" fill="#f4c40c" />
      <path d="M2 3.5 L7.5 2 L9 7 L4 8 Z" fill="#c92342" />
      <path d="M8 2.5 L14 3.5 L13.5 8.5 L8.5 8 Z" fill="#25459c" />
      <path d="M3 12 Q8 14.5 13 12" stroke="#d9a800" strokeWidth="1.2" fill="none" />
    </>
  ),
  sheet: (
    <>
      <rect width="16" height="16" rx="1" fill="#35a555" />
      <path d="M2.5 6.8 H13.5 M6.7 3 V13.5" stroke="#fff" strokeWidth="1.9" />
    </>
  ),
  codepen: (
    <path d="M8 1.5 L14 5.5 V10.5 L8 14.5 L2 10.5 V5.5 Z M2 5.5 L8 10 L14 5.5 M2 10.5 L8 6 L14 10.5 M8 1.5 V6 M8 10 V14.5" fill="none" stroke="#111" strokeWidth="1.5" />
  ),
  denigma: (
    <>
      <rect width="16" height="16" fill="#151c24" />
      <GlyphText x="8" y="12.6" fontSize="13" fill="#10e15a" $weight={700}>D</GlyphText>
    </>
  ),
};

const Favicon = ({ name }) => (
  <svg width="16" height="16" viewBox="0 0 16 16">{favicons[name]}</svg>
);

const tabsBefore = [
  ["tv", "Wa", 60], ["tv", "Wa", 60], ["tv", "Wa", 60], ["translate", "Go", 60], ["youtube", "Dr", 60],
  ["youtube", "Yo", 60], ["github", "ma", 60], ["cyLight", "mo", 60], ["siko", "Sik", 60], ["crown", "Re", 59],
  ["youtube", "Bu", 59], ["npm", "cyp", 59], ["portrait", "Se", 59], ["fpt", "FP", 59], ["cyDark", "Ho", 59],
  ["cyLight", "Ch", 59], ["gear", "We", 59], ["confluence", "Co", 59], ["w3", "Va", 59], ["w3", "Us", 59],
  ["sred", "A S", 59], ["w3", "Ca", 59],
];

const tabsAfter = [["react", "AC", 59], ["react", "AC", 59], ["w3", "Ho", 59], ["react", "AC", 59], ["google", "htt", 60]];

const bookmarks = [
  ["lions", "Karrieresenteret | H...", 150, -0.5],
  ["wheel", "Chestionare auto D...", 149, -0.36],
  ["acces", "Acces resurse științif...", 155, -0.32],
  ["arxiv", "arXiv.org e-Print arc...", 152, -0.27],
  ["scholar", "Google Scholar", 118, -0.2],
  ["romania", "Immigrate to Roma...", 150, -0.3],
  ["youtube", "koora live English", 131, -0.25],
  ["student", "| STUDENT AGENCY...", 152, -0.42],
  ["sheet", "Program DECANAT...", 149, -0.36],
  ["codepen", "CodePen: Online Co...", 152, -0.34],
  ["denigma", "Denigma - AI that r...", 161, -0.16],
];

const Line = ({ d, w = 16, h = 16, color = "#1f1f1f", width = 2 }) => (
  <svg width={w} height={h} viewBox={`0 0 ${w} ${h}`}><path d={d} fill="none" stroke={color} strokeWidth={width} /></svg>
);

function Chrome() {
  return (
    <>
      <TabStrip>
        <TabSearch><Line w={10} h={8} d="M1.5 2 L5 5.5 L8.5 2" /></TabSearch>
        {tabsBefore.map(([icon, title, width], i) => (
          <Tab key={i} $width={width} $divided={i < tabsBefore.length - 1}>
            <Favicon name={icon} /><TabTitle>{title}</TabTitle>
          </Tab>
        ))}
        <ActiveTab>
          <Favicon name="react" />
          <Line w={9} h={9} d="M1 1 L8 8 M8 1 L1 8" width={1.8} />
        </ActiveTab>
        {tabsAfter.map(([icon, title, width], i) => (
          <Tab key={i} $width={width} $divided>
            <Favicon name={icon} /><TabTitle>{title}</TabTitle>
          </Tab>
        ))}
        <NewTab><Line w={12} h={12} d="M6 1 V11 M1 6 H11" color="#6b5b53" width={1.4} /></NewTab>
        <WindowControls>
          <Line w={11} h={11} d="M0.5 6 H10.5" color="#6b5b53" width={1.1} />
          <Line w={11} h={11} d="M0.7 4 Q0.7 2.7 2 2.7 H7 Q8.3 2.7 8.3 4 V9 Q8.3 10.3 7 10.3 H2 Q0.7 10.3 0.7 9 Z M3 0.7 H8.3 Q10.3 0.7 10.3 3 V8" color="#6b5b53" width={1} />
          <Line w={11} h={11} d="M0.5 0.5 L10.5 10.5 M10.5 0.5 L0.5 10.5" color="#6b5b53" width={1.1} />
        </WindowControls>
      </TabStrip>
      <Toolbar>
        <NavButton><Line d="M14.5 8 H2.5 M8 2.5 L2.5 8 L8 13.5" width={1.8} /></NavButton>
        <NavButton><Line d="M1.5 8 H13.5 M8 2.5 L13.5 8 L8 13.5" width={1.6} color="#a0a0a0" /></NavButton>
        <NavButton><Line d="M13 9.5 A5.4 5.4 0 1 1 11.8 4.3 L13.4 6 M13.8 1.8 V6.4 H9.2" width={1.9} /></NavButton>
        <AddressBar>
          <SiteInfo>
            <svg width="15" height="15" viewBox="0 0 15 15">
              <circle cx="7.5" cy="7.5" r="6" fill="none" stroke="#333" strokeWidth="1.5" />
              <path d="M7.5 6.7 V11 M7.5 4 V5.5" stroke="#333" strokeWidth="1.6" />
            </svg>
          </SiteInfo>
          <Url><b>localhost</b>:3000/contact#main-content</Url>
          <AddressIcons>
            <Line w={18} h={18} color="#555" width={1.5} d="M5 3.2 Q9 -0.2 13 3.2 Q15.5 7 12.5 10.5 M4 5 Q3 9 9 16 L11 13.3 M1.5 2 L15.5 16.5 M8 5 a2 2 0 0 1 2.7 2.7" />
            <Line w={18} h={18} color="#555" width={1.6} d="M9 2.5 H2.8 V12.5 H15.5 V10 M6 15.3 H12 M13.5 1 V8 M10.5 5.3 L13.5 8.3 L16.5 5.3" />
            <Line w={18} h={18} color="#555" width={1.4} d="M9 1.8 L11.1 6.6 L16.3 7 L12.3 10.4 L13.6 15.6 L9 12.8 L4.4 15.6 L5.7 10.4 L1.7 7 L6.9 6.6 Z" />
          </AddressIcons>
        </AddressBar>
        <ToolbarExtras>
          <svg width="18" height="18" viewBox="0 0 18 18">
            <path d="M2.5 1.5 H12 L15.5 5 V16.5 H2.5 Z" fill="#f1f1f1" stroke="#8a8a8a" />
            <path d="M5 8 h8 M5 10.5 h8" stroke="#d0d0d0" /><rect x="4.5" y="12.5" width="9" height="2.6" fill="#999" />
          </svg>
          <Line w={44} h={18} width={1.9} d="M20 3.5 H24 Q24.2 1.3 26 1.3 Q27.8 1.3 28 3.5 H32.5 V7 Q34.6 7.3 34.6 9 Q34.6 10.8 32.5 11 V15.8 H20 V11.8 Q22.3 11.2 22.3 9.5 Q22.3 7.8 20 7.2 Z" />
          <PeachRule $margin="0 16px 0 9px" />
          <Avatar>a</Avatar>
          <Line w={4} h={16} d="M2 2 V4 M2 7 V9 M2 12 V14" />
        </ToolbarExtras>
      </Toolbar>
      <BookmarkBar>
        {bookmarks.map(([icon, title, width, track]) => (
          <Bookmark key={title} $width={width} $track={track}><Favicon name={icon} />{title}</Bookmark>
        ))}
        <BookmarkEnd>
          <Line w={143} h={12} width={1.9} d="M131 1.5 L135.5 6 L131 10.5 M136.5 1.5 L141 6 L136.5 10.5" />
          <PeachRule $margin="0 17px 0 13px" />
          <AllBookmarks>
            <Line w={17} h={14} color="#444" width={1.6} d="M1 2 Q1 1 2 1 H6.2 L8 3 H15 Q16 3 16 4 V12 Q16 13 15 13 H2 Q1 13 1 12 Z" />
            All Bookmarks
          </AllBookmarks>
        </BookmarkEnd>
      </BookmarkBar>
    </>
  );
}

const panelTabs = [
  ["Summary", <HomeIcon />], ["Details", <ListIcon color="#96999d" />], ["Reference", <InfoIcon />],
  ["Order", <OrderIcon />], ["Structure", <TreeIcon color="#8b8e92" />], ["Contrast", <ContrastIcon color="#b9bcc0" />],
];

const stats = [
  ["3", "Errors", <ErrorIcon />, 9], ["0", "Contrast Errors", <ContrastIcon color="#bd3638" />, 9],
  ["1", "Alerts", <AlertIcon />, 9], ["16", "Features", <CheckIcon />, 10],
  ["14", "Structural Elements", <TreeIcon color="#4877b8" />, 9], ["11", "ARIA", <Box size={24} dark="#4a2370" light="#7c5a9e" />, 13],
];

function WaveSidebar() {
  return (
    <Sidebar>
      <Brand>
        <div>
          <BrandRow><WaveLogo /><BrandName>WAVE</BrandName></BrandRow>
          <Tagline>web accessibility evaluation tool</Tagline>
        </div>
        <Powered>powered by<br /><a>WebAIM</a></Powered>
      </Brand>
      <StylesBox>
        Styles:
        <ToggleLabel $gap={14}>OFF</ToggleLabel>
        <Toggle><Knob /></Toggle>
        <ToggleLabel $gap={9}>ON</ToggleLabel>
      </StylesBox>
      <SectionTitle>Summary</SectionTitle>
      <Panel>
        <PanelTabs>
          {panelTabs.map(([label, icon], i) => (
            <PanelTab key={label} $active={i === 0}>{icon}{label}</PanelTab>
          ))}
        </PanelTabs>
        <StatsGrid>
          {stats.map(([value, label, icon, gap], i) => (
            <Stat key={label} $first={i % 2 === 0} $top={i === 2 || i === 3 ? 16 : 17}>
              <StatTop $gap={gap}>{icon}{value}</StatTop>
              <StatLabel>{label}</StatLabel>
            </Stat>
          ))}
        </StatsGrid>
        <DetailsButton><ListIcon color="#fff" />View details ›</DetailsButton>
      </Panel>
    </Sidebar>
  );
}

function LabelRow({ text, required }) {
  return (
    <FieldLabel>
      <LabelText>{text}</LabelText>
      {required && <Required>*</Required>}
      <LabelMarks $gap={required ? 0 : 6}>
        {required && <AriaLabelMark />}
        <TagMark />
      </LabelMarks>
    </FieldLabel>
  );
}

function RequiredField({ label, placeholder }) {
  return (
    <Field $height={148}>
      <LabelRow text={label} required />
      <ControlRow>
        <Input $width={218} placeholder={placeholder} />
        <RowMark $top={6}><AriaMark /></RowMark>
        <AltNote $edges="1px 0 1px 1px" $top={12}>*aria-</AltNote>
      </ControlRow>
      <ErrorRow>
        <AltNote $edges="1px 1px 1px 0" $top={6}>required="true", aria-invalid="false"*</AltNote>
        <BrokenAriaMark />
      </ErrorRow>
    </Field>
  );
}

function ContactPage() {
  return (
    <Page>
      <SkipMark />
      <Hero>
        <HeroTitle><RoundMark label="h1" />CONTACT</HeroTitle>
        Please fill in the form below and send your comments and questions<br />to FPT University.
      </Hero>
      <Content>
        <Card>
          <CardTitle><Halo $round><RoundMark label="h2" /></Halo>FPT UNIVERSITY</CardTitle>
          <ListBadge><Halo as="div" $round><RoundMark /></Halo></ListBadge>
          <InfoItem>
            <InfoLead>
              <BuildingIcon /><Halo $margin="0 6px 0 11px"><ImageMark /></Halo>
              <AltNote $edges="1px" $top={6}>*University Adress*</AltNote><InfoText>D1 Street,</InfoText>
            </InfoLead>
            Saigon Hi-tech Park, Long Thanh My<br />Ward, Thu Duc City, Ho Chi Minh City
          </InfoItem>
          <InfoItem>
            <InfoLead>
              <PhoneIcon /><Halo $margin="0 6px 0 11px"><ImageMark /></Halo>
              <AltNote $edges="1px" $top={6}>*Phone number*</AltNote><InfoText>(028) 7300</InfoText>
            </InfoLead>
            5588
          </InfoItem>
          <InfoItem>
            <InfoLead>
              <MailIcon /><Halo $margin="0 6px 0 11px"><ImageMark /></Halo>
              <AltNote $edges="1px 0 1px 1px" $top={6}>*Email</AltNote>
            </InfoLead>
            <NoteLine><AltNote $edges="1px 1px 1px 0" $top={3}>adress*</AltNote>daihoc.hcm@fpt.edu.vn</NoteLine>
          </InfoItem>
        </Card>
        <Form>
          <FieldGrid>
            <RequiredField label="Full name" placeholder="John Doe" />
            <RequiredField label="Email" placeholder="johndoe@example.com" />
            <Field $height={148}>
              <LabelRow text="Country Select" />
              <Select $width={309}>International<SelectArrow /></Select>
            </Field>
            <RequiredField label="Phone number" placeholder="123456789" />
          </FieldGrid>
          <Field $height={102}>
            <LabelRow text="Contact department" />
            <Select $width={343}>Student Recruitment &amp; Communication Board<SelectArrow /></Select>
          </Field>
          <Field $height={101}>
            <LabelRow text="Subject" />
            <Input $width={710} $height={41} />
          </Field>
          <Field $height={187}>
            <LabelRow text="Content" />
            <Textarea><ResizeGrip /></Textarea>
          </Field>
        </Form>
      </Content>
      <CodeBadge><CodeHexagon /></CodeBadge>
    </Page>
  );
}

export default function App() {
  return (
    <>
      <GlobalStyle />
      <Screen>
        <Chrome />
        <Body>
          <WaveSidebar />
          <ContactPage />
        </Body>
      </Screen>
    </>
  );
}
